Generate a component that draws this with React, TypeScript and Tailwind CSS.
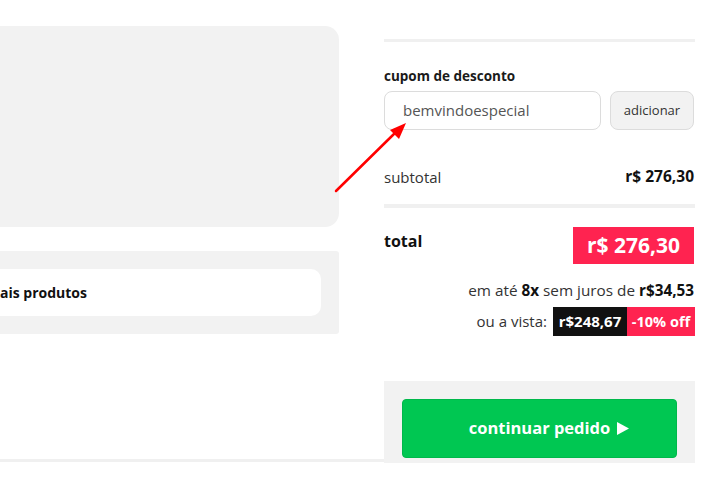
import React from "react";

const Arrow: React.FC = () => (
  <svg
    className="absolute left-0 top-0 pointer-events-none"
    width="722"
    height="478"
    viewBox="0 0 722 478"
  >
    <line x1="336" y1="191" x2="396" y2="132" stroke="#f00" strokeWidth="2.5" strokeLinecap="round" />
    <polygon points="406,123 390,130 399,139" fill="#f00" />
  </svg>
);

const App: React.FC = () => {
  return (
    <div
      className="relative w-[722px] h-[478px] overflow-hidden bg-white flex text-[#222]"
      style={{ fontFamily: '"Open Sans", "Liberation Sans", sans-serif' }}
    >
      {/* left side (cart items, cut off) */}
      <div className="w-[384px] flex flex-col shrink-0">
        <div className="w-[339px] mt-[26px] h-[201px] bg-[#f2f2f2] rounded-r-[14px]" />
        <div className="w-[339px] mt-[24px] h-[83px] bg-[#f2f2f2] rounded-r-[3px] pt-[18px] pr-[18px]">
          <div className="h-[47px] bg-white rounded-r-[10px] flex items-center">
            <span className="text-[14px] font-bold text-[#111]">ais produtos</span>
          </div>
        </div>
        <div className="mt-[125px] h-[3px] bg-[#f0f0f0]" />
      </div>

      {/* resumo */}
      <div className="w-[311px] shrink-0 flex flex-col">
        <div className="mt-[39px] h-[3px] bg-[#f0f0f0]" />

        <div className="mt-[26px] text-[13.5px] leading-[16px] font-bold text-[#1a1a1a]">
          cupom de desconto
        </div>
        <div className="mt-[7px] flex gap-[9px] pr-[1px]">
          <div className="w-[217px] h-[39px] border border-[#dcdcdc] rounded-[8px] flex items-center pl-[18px] text-[15px] text-[#555]">
            bemvindoespecial
          </div>
          <button className="flex-1 h-[39px] border border-[#dcdcdc] bg-[#f2f2f2] rounded-[8px] text-[13px] text-[#333]">
            adicionar
          </button>
        </div>

        <div className="mt-[37px] h-[20px] flex items-center justify-between pr-[1px]">
          <span className="text-[15px] text-[#333]">subtotal</span>
          <span className="text-[15.5px] font-bold text-[#111]">r$ 276,30</span>
        </div>

        <div className="mt-[17px] h-[4px] bg-[#f0f0f0]" />

        <div className="mt-[19px] flex justify-between items-start pr-[1px]">
          <span className="mt-[3px] text-[16px] leading-[22px] font-bold text-[#111]">total</span>
          <div className="w-[121px] h-[37px] bg-[#ff2350] text-white text-[21px] font-bold flex items-center justify-center">
            r$ 276,30
          </div>
        </div>

        <div className="mt-[16px] h-[20px] text-right text-[15.3px] leading-[20px] text-[#333] pr-[1px]">
          em até <b className="text-[#111]">8x</b> sem juros de <b className="text-[#111]">r$34,53</b>
        </div>

        <div className="mt-[7px] flex justify-end items-center">
          <span className="text-[15px] text-[#333] mr-[6px]">ou a vista:</span>
          <span className="w-[74px] h-[29px] bg-[#111] text-white text-[15px] font-bold flex items-center justify-center">
            r$248,67
          </span>
          <span className="w-[68px] h-[29px] bg-[#ff2350] text-white text-[14.5px] font-bold flex items-center justify-center">
            -10% off
          </span>
        </div>

        <div className="mt-[45px] h-[82px] bg-[#f2f2f2] pt-[18px] px-[18px]">
          <button className="w-full h-[59px] bg-[#00c752] border border-[#00b84b] rounded-[4px] pl-[20px] text-white text-[16.5px] font-bold flex items-center justify-center gap-[6px]">
            continuar pedido
            <svg width="14" height="15" viewBox="0 0 14 15">
              <polygon points="1,1 13,7.5 1,14" fill="#fff" />
            </svg>
          </button>
        </div>
      </div>

      <Arrow />
    </div>
  );
};

export default App;
